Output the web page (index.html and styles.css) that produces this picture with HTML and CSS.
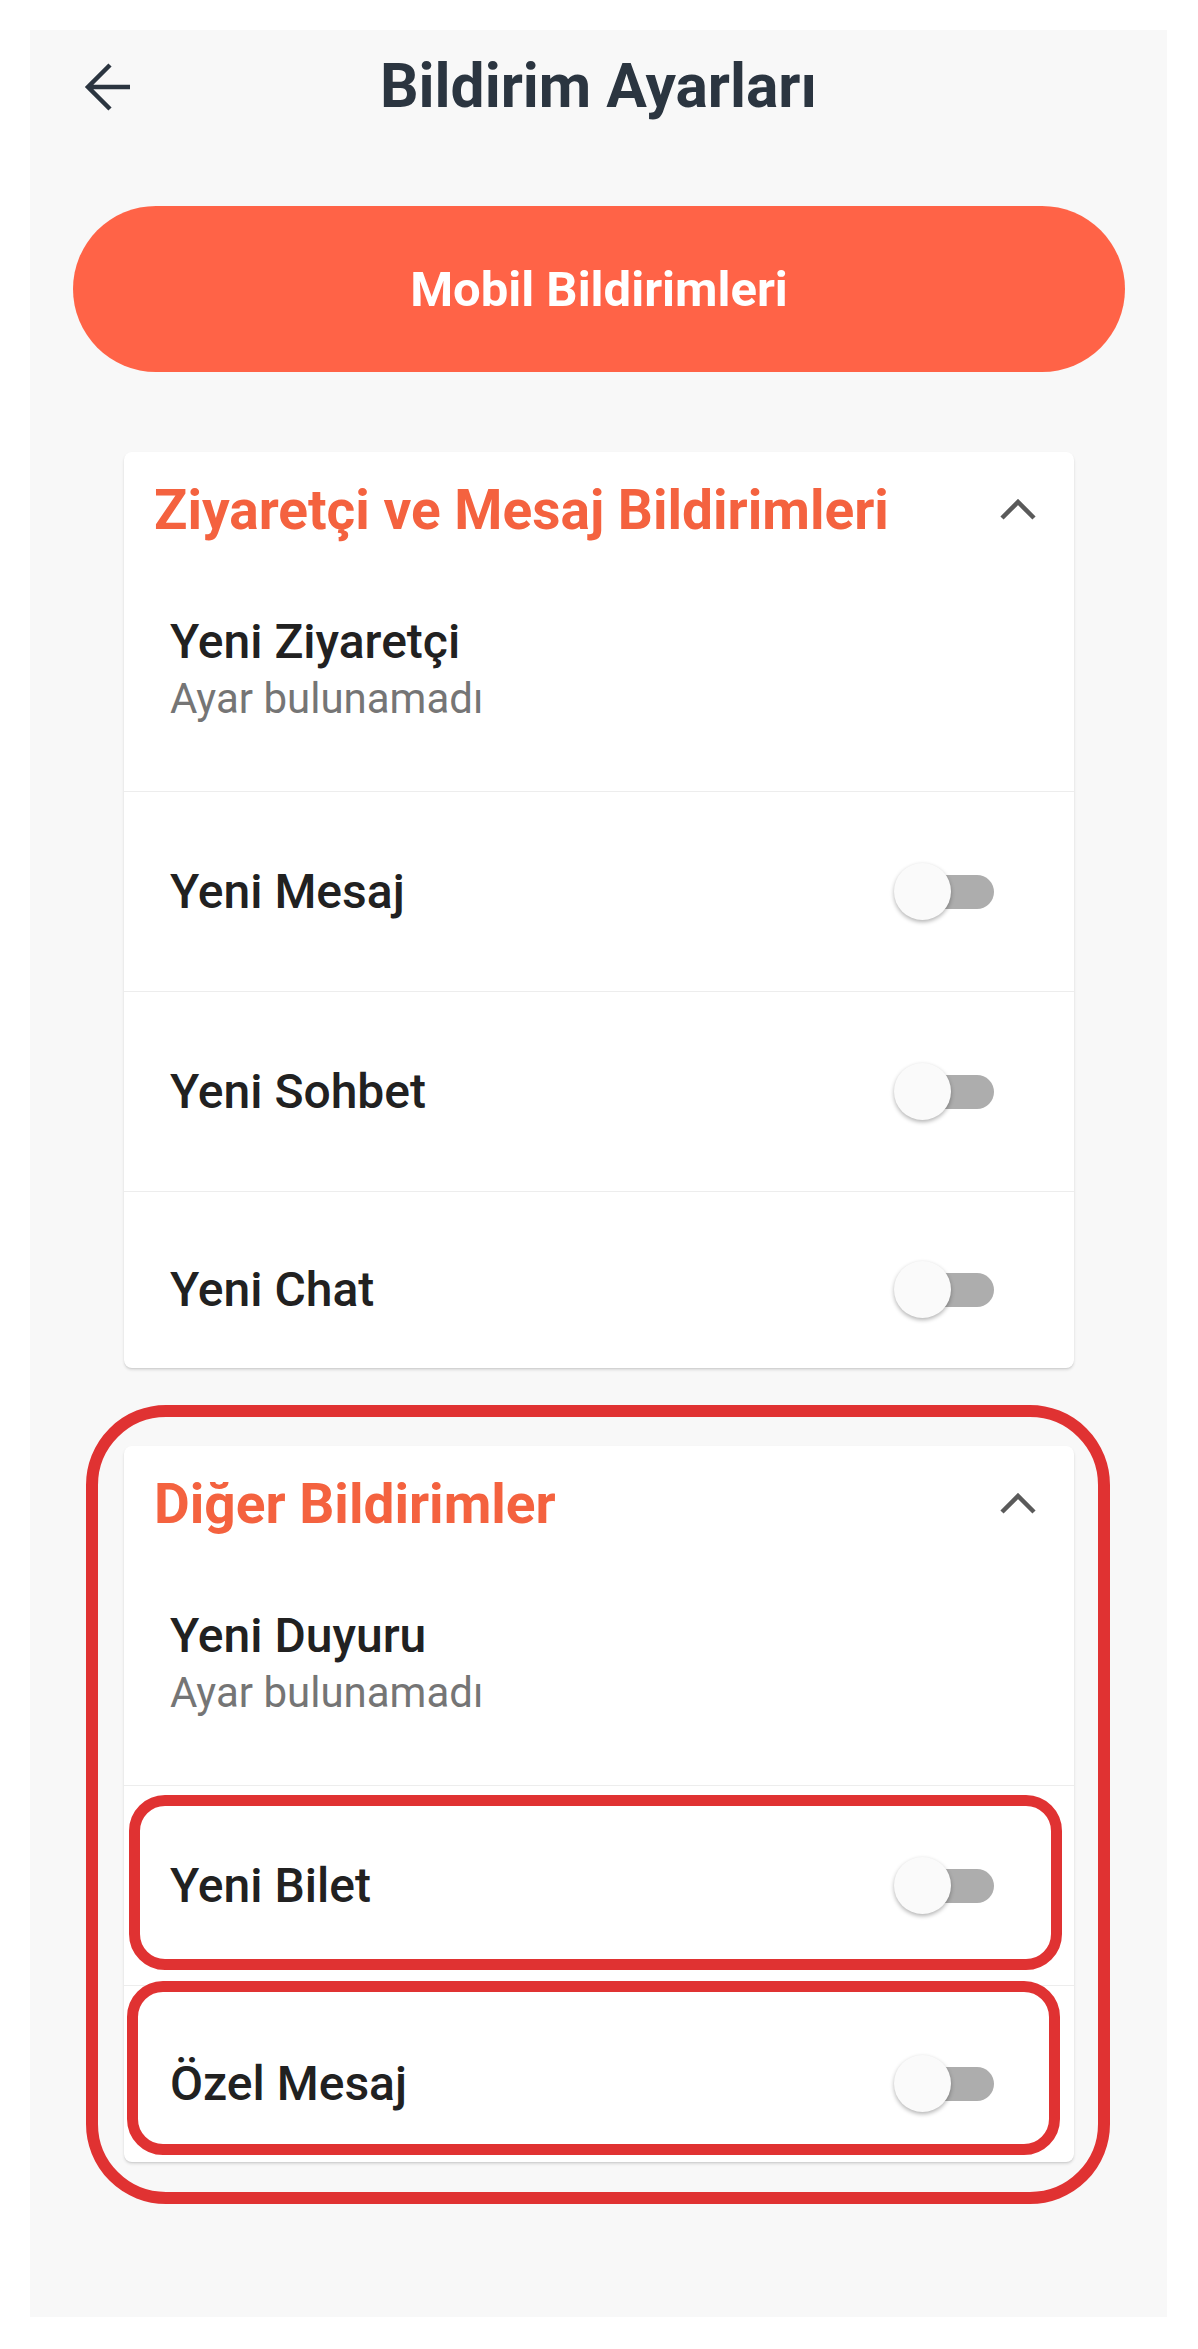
FILE: index.html
```html
<!DOCTYPE html>
<html>
<head>
  <title>Bildirim Ayarları</title>
  <link rel="stylesheet" href="styles.css">
</head>
<body>

  <div class="screen">
    <header class="topbar">
      <button class="back" aria-label="Geri">
        <svg width="48" height="48" viewBox="0 0 48 48">
          <path d="M26 2 L4 24 L26 46 M4 24 H46" fill="none" stroke="#2b3540" stroke-width="4.5"/>
        </svg>
      </button>
      <h1>Bildirim Ayarları</h1>
      <span></span>
    </header>

    <div class="content">
      <button class="tab">Mobil Bildirimleri</button>

      <section class="card">
        <div class="card-head">
          <h2>Ziyaretçi ve Mesaj Bildirimleri</h2>
          <svg class="chevron" width="36" height="22" viewBox="0 0 36 22">
            <path d="M2 19 L18 3 L34 19" fill="none" stroke="#5a5a5a" stroke-width="4.5"/>
          </svg>
        </div>
        <div class="item item-info">
          <div class="item-title">Yeni Ziyaretçi</div>
          <div class="item-sub">Ayar bulunamadı</div>
        </div>
        <div class="item">
          <span class="item-title">Yeni Mesaj</span>
          <span class="switch"><span class="track"></span><span class="knob"></span></span>
        </div>
        <div class="item">
          <span class="item-title">Yeni Sohbet</span>
          <span class="switch"><span class="track"></span><span class="knob"></span></span>
        </div>
        <div class="item">
          <span class="item-title">Yeni Chat</span>
          <span class="switch"><span class="track"></span><span class="knob"></span></span>
        </div>
      </section>

      <section class="card card-marked">
        <div class="card-head">
          <h2>Diğer Bildirimler</h2>
          <svg class="chevron" width="36" height="22" viewBox="0 0 36 22">
            <path d="M2 19 L18 3 L34 19" fill="none" stroke="#5a5a5a" stroke-width="4.5"/>
          </svg>
        </div>
        <div class="item item-info">
          <div class="item-title">Yeni Duyuru</div>
          <div class="item-sub">Ayar bulunamadı</div>
        </div>
        <div class="item">
          <span class="item-title">Yeni Bilet</span>
          <span class="switch"><span class="track"></span><span class="knob"></span></span>
          <span class="mark mark-a"></span>
        </div>
        <div class="item">
          <span class="item-title">Özel Mesaj</span>
          <span class="switch"><span class="track"></span><span class="knob"></span></span>
          <span class="mark mark-b"></span>
        </div>
        <span class="mark-outer"></span>
      </section>
    </div>
  </div>

</body>
</html>
```

FILE: styles.css
```css
body {
  margin: 0;
  background-color: #fff;
  font-family: Roboto, "Noto Sans", sans-serif;
}

.screen {
  margin: 30px 31px 0 30px;
  height: 2287px;
  background-color: #f8f8f8; /* fondo gris claro */
}

/* barra superior */
.topbar {
  height: 114px;
  display: grid;
  grid-template-columns: 1fr auto 1fr;
  align-items: center;
  padding-left: 54px;
  padding-right: 54px;
}

.back {
  width: 48px;
  height: 48px;
  padding: 0;
  border: none;
  background: none;
  display: flex;
}

.topbar h1 {
  margin: 0;
  font-size: 60.5px;
  font-weight: 700;
  line-height: 1;
  color: #2b3540;
}

.content {
  padding: 0 42px 0 43px;
}

.tab {
  display: block;
  width: 100%;
  height: 166px;
  margin-top: 62px;
  border: none;
  border-radius: 83px;
  background-color: #ff6347;
  color: #fff;
  font-family: Roboto, sans-serif;
  font-size: 49px;
  font-weight: 700;
}

/* tarjetas */
.card {
  margin: 80px 51px 0;
  background-color: #fff;
  border-radius: 8px;
  box-shadow: 0 2px 3px rgba(0, 0, 0, 0.12), 0 1px 1px rgba(0, 0, 0, 0.06);
}

.card + .card {
  margin-top: 78px;
}

.card-marked {
  position: relative;
}

.card-head {
  height: 116px;
  display: flex;
  align-items: center;
  justify-content: space-between;
  padding: 0 38px 0 30px;
}

.card-head h2 {
  margin: 0;
  font-size: 55px;
  font-weight: 700;
  color: #f4623f;
}

.chevron {
  display: block;
}

.item {
  position: relative;
  box-sizing: border-box;
  height: 200px;
  display: flex;
  align-items: center;
  justify-content: space-between;
  padding: 0 80px 0 46px;
  border-top: 1px solid #ededed;
}

.item:last-of-type {
  height: 177px;
  padding-top: 19px;
}

.item-info {
  height: auto;
  display: block;
  border-top: none;
  padding: 46px 0 68px 46px;
}

.item-title {
  font-size: 48px;
  font-weight: 500;
  line-height: 56px;
  color: #212121;
}

.item-sub {
  margin-top: 5px;
  font-size: 42px;
  line-height: 48px;
  color: #757575;
}

/* interruptor apagado */
.switch {
  position: relative;
  width: 100px;
  height: 58px;
}

.track {
  position: absolute;
  right: 0;
  top: 12px;
  width: 72px;
  height: 34px;
  border-radius: 17px;
  background-color: #adadad;
}

.knob {
  position: absolute;
  left: 0;
  top: 0;
  width: 57px;
  height: 57px;
  border-radius: 50%;
  background-color: #fafafa;
  box-shadow: 0 2px 4px rgba(0, 0, 0, 0.3);
}

/* marcas rojas */
.mark,
.mark-outer {
  position: absolute;
  border: 11px solid #e03232;
  pointer-events: none;
}

.mark {
  border-radius: 36px;
}

.mark-a {
  top: 9px;
  left: 5px;
  right: 12px;
  bottom: 15px;
}

.mark-b {
  top: -5px;
  left: 3px;
  right: 14px;
  bottom: 7px;
}

.mark-outer {
  top: -41px;
  left: -38px;
  right: -36px;
  bottom: -42px;
  border-width: 12px;
  border-radius: 80px;
}
```
